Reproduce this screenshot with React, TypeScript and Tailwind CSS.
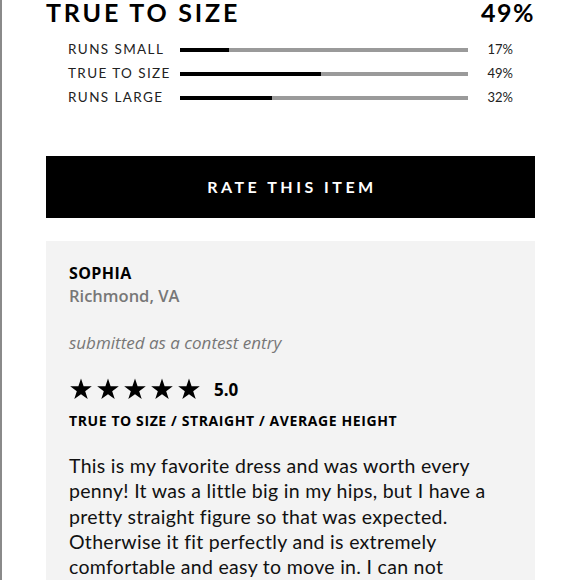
import * as React from "react";

const rows = [
  { label: "RUNS SMALL", pct: 17 },
  { label: "TRUE TO SIZE", pct: 49 },
  { label: "RUNS LARGE", pct: 32 },
];

function Star() {
  return (
    <svg viewBox="0 0 24 24" className="h-[24px] w-[24px]" fill="#000">
      <polygon points="12,1.5 14.6,9.2 22.8,9.3 16.2,14.2 18.7,22 12,17.3 5.3,22 7.8,14.2 1.2,9.3 9.4,9.2" />
    </svg>
  );
}

export default function App() {
  return (
    <div className="h-[580px] w-[580px] overflow-hidden border-l-2 border-[#8a8a8a] bg-white font-['Lato',sans-serif] text-black">
      <div className="ml-[44px] mr-[45px]">
        <div className="flex items-baseline justify-between leading-[24px]">
          <span className="text-[25px] font-bold tracking-[2.8px]">TRUE TO SIZE</span>
          <span className="text-[25px] font-bold tracking-[1.5px]">49%</span>
        </div>

        <div className="mt-[17px] flex flex-col gap-[7px] pl-[22px]">
          {rows.map((r) => (
            <div key={r.label} className="flex h-[17px] items-center">
              <span className="w-[112px] text-[13.5px] tracking-[1.4px] text-[#222]">{r.label}</span>
              <div className="flex h-[4px] w-[288px]">
                <div className="h-full bg-black" style={{ width: `${r.pct}%` }} />
                <div className="h-full flex-1 bg-[#9a9a9a]" />
              </div>
              <span className="w-[45px] text-right text-[13px] text-[#222]">{r.pct}%</span>
            </div>
          ))}
        </div>

        <button
          type="button"
          className="mt-[50px] flex h-[62px] w-full items-center justify-center bg-black pl-[3px] text-[16px] font-bold tracking-[3.5px] text-white"
        >
          RATE THIS ITEM
        </button>

        <div className="mt-[23px] bg-[#f3f3f3] px-[23px] pb-[40px] pt-[21px] font-['Open_Sans',sans-serif]">
          <div className="text-[16px] font-bold leading-[22px] tracking-[0.4px]">SOPHIA</div>
          <div className="text-[16.5px] font-semibold leading-[24px] text-[#777]">Richmond, VA</div>

          <div className="mt-[22px] text-[17px] italic text-[#777]">submitted as a contest entry</div>

          <div className="mt-[21px] flex items-center">
            <div className="flex gap-[3px]">
              <Star />
              <Star />
              <Star />
              <Star />
              <Star />
            </div>
            <span className="ml-[13px] text-[17px] font-bold">5.0</span>
          </div>

          <div className="mt-[8px] text-[14px] font-bold tracking-[0.6px]">
            TRUE TO SIZE / STRAIGHT / AVERAGE HEIGHT
          </div>

          <p className="mt-[22px] font-['Lato',sans-serif] text-[19.5px] leading-[25.3px] tracking-[0.3px] text-[#111]">
            This is my favorite dress and was worth every penny! It was a little big in my hips, but I have a pretty
            straight figure so that was expected. Otherwise it fit perfectly and is extremely comfortable and easy to
            move in. I can not recommend it enough for anyone looking for a great summer dress.
          </p>
        </div>
      </div>
    </div>
  );
}
